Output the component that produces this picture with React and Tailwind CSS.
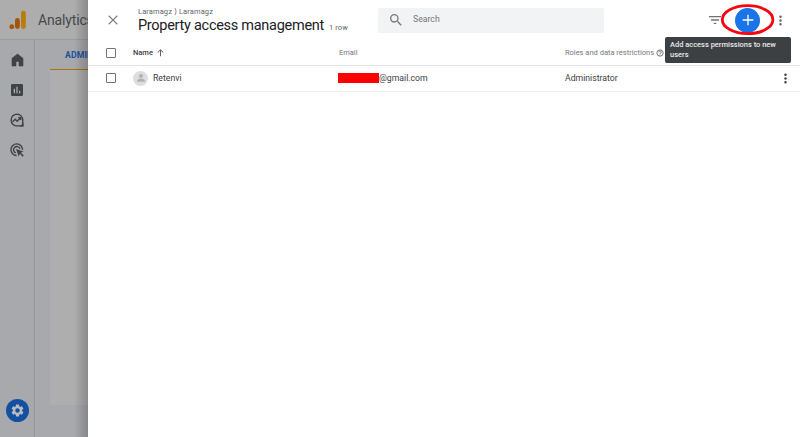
import React from "react";

function Icon({ d, className, children }) {
  return (
    <svg viewBox="0 0 24 24" fill="currentColor" className={className}>
      {d && <path d={d} />}
      {children}
    </svg>
  );
}

const MORE = "M12 8a2 2 0 1 0 0-4 2 2 0 0 0 0 4zm0 2a2 2 0 1 0 0 4 2 2 0 0 0 0-4zm0 6a2 2 0 1 0 0 4 2 2 0 0 0 0-4z";
const GEAR =
  "M19.14 12.94c.04-.3.06-.61.06-.94 0-.32-.02-.64-.07-.94l2.03-1.58c.18-.14.23-.41.12-.61l-1.92-3.32c-.12-.22-.37-.29-.59-.22l-2.39.96c-.5-.38-1.03-.7-1.62-.94l-.36-2.54c-.04-.24-.24-.41-.48-.41h-3.84c-.24 0-.43.17-.47.41l-.36 2.54c-.59.24-1.13.57-1.62.94l-2.39-.96c-.22-.08-.47 0-.59.22L2.74 8.87c-.12.21-.08.47.12.61l2.03 1.58c-.05.3-.09.63-.09.94s.02.64.07.94l-2.03 1.58c-.18.14-.23.41-.12.61l1.92 3.32c.12.22.37.29.59.22l2.39-.96c.5.38 1.03.7 1.62.94l.36 2.54c.05.24.24.41.48.41h3.84c.24 0 .44-.17.47-.41l.36-2.54c.59-.24 1.13-.56 1.62-.94l2.39.96c.22.08.47 0 .59-.22l1.92-3.32c.12-.22.07-.47-.12-.61l-2.01-1.58zM12 15.6a3.6 3.6 0 1 1 0-7.2 3.6 3.6 0 0 1 0 7.2z";

function Checkbox() {
  return <span className="box-border h-[10px] w-[10px] shrink-0 rounded-[1px] border-[1.5px] border-[#6f7377]" />;
}

function Backdrop() {
  return (
    <div className="flex h-full w-[88px] shrink-0 flex-col overflow-hidden bg-[#a7a9ac]">
      <header className="flex h-[40px] shrink-0 items-center border-b border-[#9a9c9e] bg-[#adadad] pl-[9px]">
        <svg viewBox="0 0 17 19" className="h-[19px] w-[17px] shrink-0">
          <rect x="12" y="0.8" width="4.8" height="18.2" rx="2.4" fill="#b77f05" />
          <rect x="6" y="8" width="4.8" height="11" rx="2.4" fill="#a4550b" />
          <circle cx="2.8" cy="16.7" r="2.4" fill="#a4550b" />
        </svg>
        <span className="mt-[2px] ml-[12px] text-[14px] tracking-[-0.15px] text-[#46494c]">Analytics</span>
      </header>
      <div className="flex min-h-0 flex-1">
        <nav className="flex w-[35px] shrink-0 flex-col items-center border-r border-[#95979a] pt-[12px] pb-[15px] text-[#404346]">
          <svg viewBox="0 0 15 15" className="h-[15px] w-[15px]" fill="currentColor">
            <path d="M7.500 2 2 6.300V14h4V9.500h3V14h4V6.300z" stroke="currentColor" strokeWidth="0.6" strokeLinejoin="round" />
          </svg>
          <Icon
            className="mt-[15px] h-[16px] w-[16px]"
            d="M19 3H5a2 2 0 0 0-2 2v14c0 1.1.9 2 2 2h14a2 2 0 0 0 2-2V5a2 2 0 0 0-2-2zM9 17H7v-7h2v7zm4 0h-2V7h2v10zm4 0h-2v-4h2v4z"
          />
          <svg viewBox="0 0 14 14" className="mt-[15px] h-[14px] w-[14px]" fill="none" stroke="currentColor" strokeWidth="1.4">
            <path d="M7 1.1a5.9 5.9 0 1 0 0 11.8h5.7V7A5.8 5.8 0 0 0 7 1.1z" />
            <path d="M2.6 8.7 5.2 6.3l1.9 1.9 3.3-3.3M8.2 4.6h2.5v2.5" />
            <path d="M9.7 13.5h3.8V9.7z" fill="currentColor" stroke="none" />
          </svg>
          <svg viewBox="0 0 14 14" className="mt-[16px] h-[14px] w-[14px]" fill="none" stroke="currentColor" strokeWidth="1.4">
            <path d="M6.6 12.5A5.8 5.8 0 1 1 12.6 6.8" />
            <path d="M5.800 9.900A3.300 3.300 0 1 1 10 5.800" />
            <path d="m6 6 7.500 2.600-2.600 1.100 2.900 2.900-1.100 1.100-2.900-2.900-1.100 2.700z" fill="currentColor" stroke="none" />
          </svg>
          <span className="mt-auto flex h-[23px] w-[23px] shrink-0 items-center justify-center rounded-full bg-[#1450a1] text-[#b9bdc3]">
            <Icon className="h-[15px] w-[15px]" d={GEAR} />
          </span>
        </nav>
        <main className="flex flex-1 flex-col pl-[15px]">
          <div className="flex h-[30px] shrink-0 items-center border-b border-[#ae7008] pt-[2px] pl-[15px] text-[8.7px] font-bold tracking-[0.1px] text-[#1c529f]">
            ADMIN
          </div>
          <div className="h-[335px] bg-[#aeaeae]" />
        </main>
      </div>
    </div>
  );
}

export default function App() {
  return (
    <div className="relative flex h-[437px] w-[800px] overflow-hidden bg-white font-['Roboto',sans-serif] text-[#3c4043]">
      <Backdrop />
      <div className="pointer-events-none absolute inset-y-0 left-[74px] w-[14px] bg-linear-to-r from-transparent to-black/20" />
      <section className="flex min-w-0 flex-1 flex-col bg-white">
        <header className="flex h-[40px] shrink-0 items-center">
          <Icon
            className="ml-[17px] h-[16px] w-[16px] shrink-0 text-[#74787c]"
            d="M19 6.2 17.8 5 12 10.8 6.2 5 5 6.2l5.8 5.8L5 17.8 6.2 19l5.8-5.8 5.8 5.8 1.2-1.2-5.8-5.8z"
          />
          <div className="ml-[17px] w-[240px] shrink-0 whitespace-nowrap">
            <div className="flex text-[7.5px] leading-[9px] tracking-[0.1px] text-[#5f6368]">
              <span>Laramagz</span>
              <span className="w-[7px] pl-[1px] text-center">⟩</span>
              <span>Laramagz</span>
            </div>
            <div className="mt-[1px] flex items-baseline">
              <h1 className="text-[14.5px] leading-[17px] tracking-[-0.28px] text-[#202124]">Property access management</h1>
              <span className="ml-[5px] text-[7.5px] tracking-[0.1px] text-[#5f6368]">1 row</span>
            </div>
          </div>
          <div className="flex h-[25px] w-[226px] shrink-0 items-center rounded-[2px] bg-[#f1f3f4] pl-[10px]">
            <Icon
              className="h-[16px] w-[16px] text-[#74787c]"
              d="M15.5 14h-.79l-.28-.27A6.47 6.47 0 0 0 16 9.5 6.5 6.5 0 1 0 9.5 16c1.61 0 3.09-.59 4.23-1.57l.27.28v.79l5 4.99L20.49 19l-4.99-5zm-6 0a4.5 4.5 0 1 1 0-9 4.5 4.5 0 0 1 0 9z"
            />
            <span className="ml-[9px] text-[8.7px] text-[#74787c]">Search</span>
          </div>
          <Icon className="ml-[103px] h-[16px] w-[16px] shrink-0 text-[#6f7377]" d="M10 18h4v-2h-4v2zM3 6v2h18V6H3zm3 7h12v-2H6v2z" />
          <button className="relative ml-[12px] flex h-[25px] w-[25px] shrink-0 items-center justify-center rounded-full bg-[#1a73e8] text-white">
            <Icon className="h-[16px] w-[16px]" d="M20 13h-7v7h-2v-7H4v-2h7V4h2v7h7z" />
            <svg viewBox="0 0 54 32" className="absolute top-[-4px] left-[-15px] h-[32px] w-[54px] max-w-none overflow-visible">
              <ellipse cx="27.6" cy="15.7" rx="25.3" ry="14" fill="none" stroke="#f80610" strokeWidth="2.8" />
            </svg>
          </button>
          <Icon className="ml-[13px] h-[15px] w-[15px] shrink-0 text-[#5f6368]" d={MORE} />
        </header>
        <div className="flex h-[26px] shrink-0 items-center border-b border-[#e4e5e7] pl-[18px] text-[7.5px] text-[#74787c]">
          <Checkbox />
          <span className="ml-[17px] font-medium text-[#3c4043]">Name</span>
          <Icon className="ml-[3px] h-[9px] w-[9px] text-[#505458]" d="M4 11l1.500 1.500 5.300-5.300V22h2.400V7.200l5.300 5.300L20 11l-8-8z" />
          <span className="ml-[174px] w-[226px]">Email</span>
          <span className="whitespace-nowrap">Roles and data restrictions</span>
          <svg viewBox="0 0 24 24" className="ml-[2px] h-[8px] w-[8px]" fill="none" stroke="#5f6368" strokeWidth="2.5">
            <circle cx="12" cy="12" r="9.5" />
            <path d="M8.5 9.5a3.5 3.5 0 1 1 5.6 2.8c-1.3 1-2.1 1.4-2.1 2.9M12 16.5V19" />
          </svg>
        </div>
        <div className="flex h-[26px] shrink-0 items-center border-b border-[#eceded] pb-[1px] pl-[18px] text-[8.7px]">
          <Checkbox />
          <span className="ml-[17px] flex h-[15px] w-[15px] items-center justify-center rounded-full bg-[#dedede] text-[#b2b2b2]">
            <Icon className="h-[12px] w-[12px]">
              <circle cx="12" cy="8" r="4" />
              <path d="M4 18c0-3 4-5 8-5s8 2 8 5v1.500H4z" />
            </Icon>
          </span>
          <span className="mt-[1px] ml-[5px] w-[185px]">Retenvi</span>
          <span className="h-[10px] w-[41px] shrink-0 bg-[#ff0000]" />
          <span className="mt-[1px] w-[186px]">@gmail.com</span>
          <span className="mt-[1px] w-[213px]">Administrator</span>
          <Icon className="mt-[1px] h-[15px] w-[15px] shrink-0 text-[#3c4043]" d={MORE} />
        </div>
      </section>
      <div className="absolute top-[37px] left-[665px] h-[26px] w-[126px] rounded-[2px] bg-[#3c4043] pt-[3px] pl-[5px] text-[7.5px] leading-[10px] font-medium tracking-[-0.01px] whitespace-nowrap text-[#e8eaed]">
        Add access permissions to new
        <br />
        users
      </div>
    </div>
  );
}
